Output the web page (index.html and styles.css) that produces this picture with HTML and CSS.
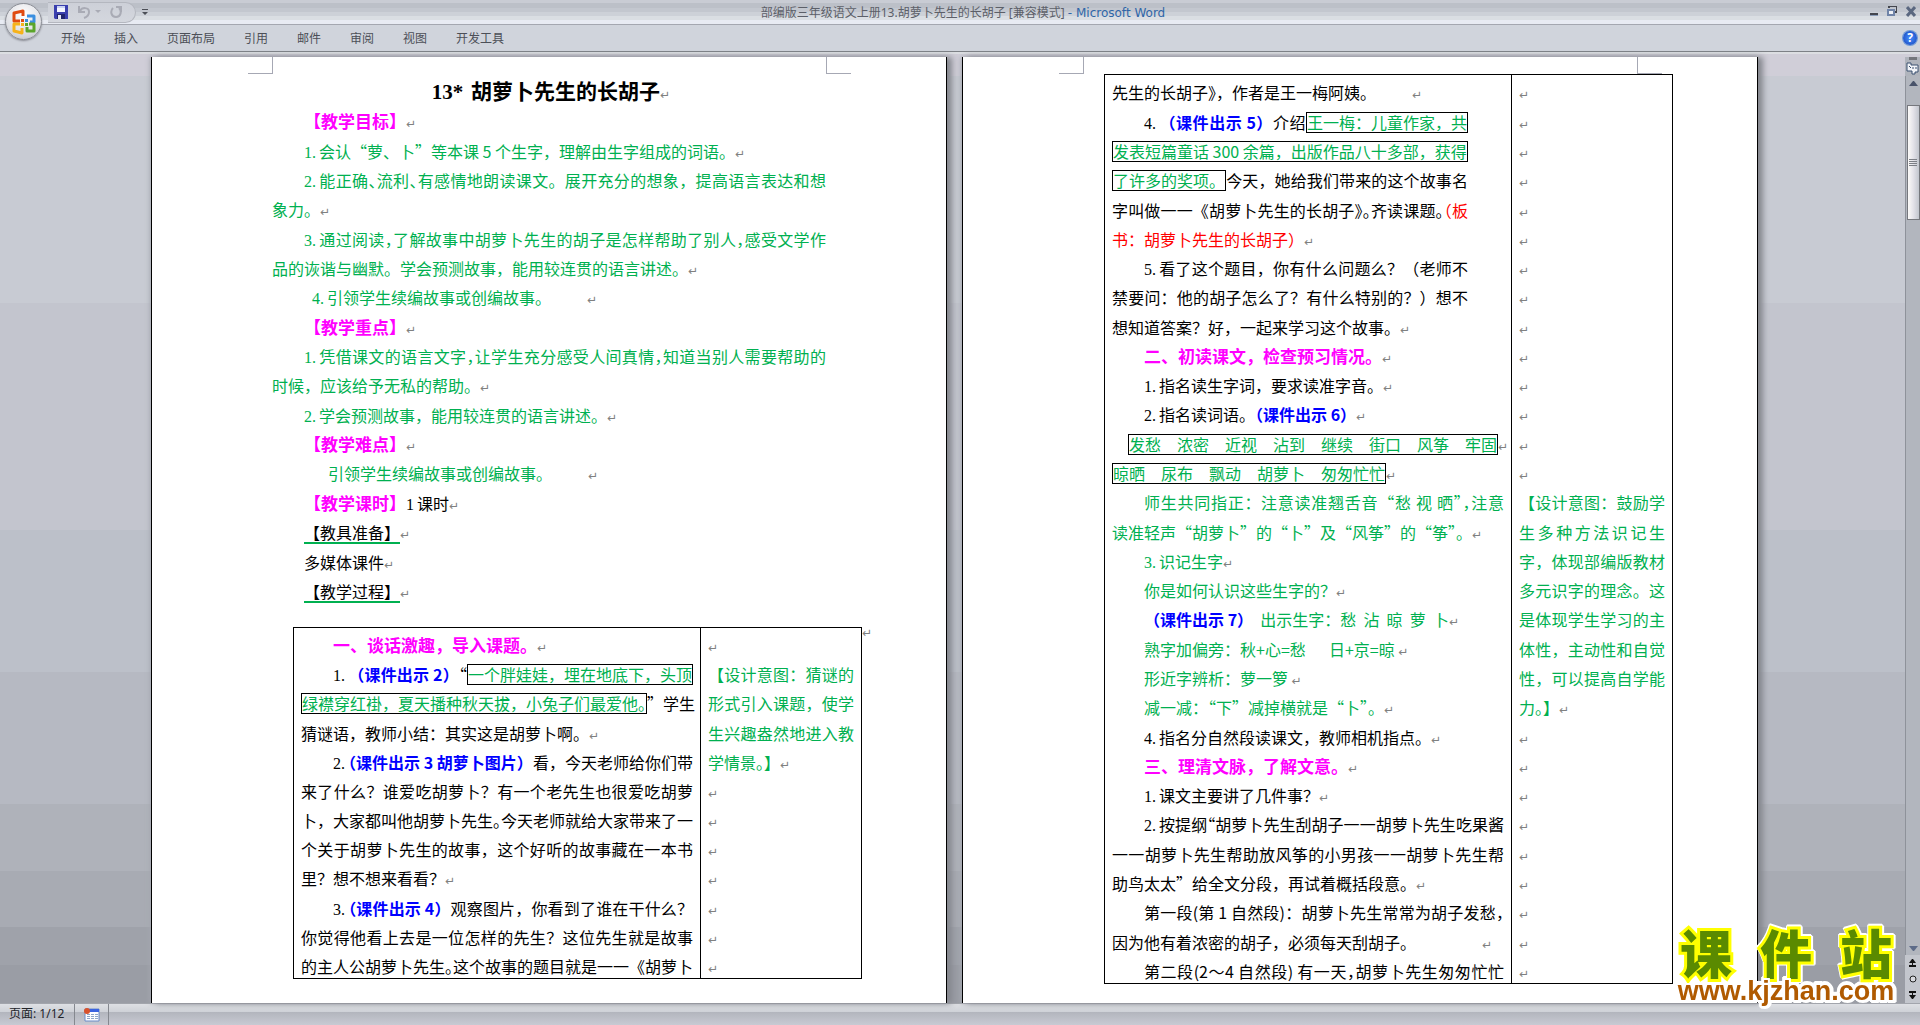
FILE: index.html
```html
<!DOCTYPE html>
<html lang="zh-CN">
<head>
<meta charset="UTF-8">
<meta name="viewport" content="width=device-width, initial-scale=1.0">
<title>部编版三年级语文上册13.胡萝卜先生的长胡子</title>
<link rel="stylesheet" href="styles.css">
</head>
<body>
<header class="titlebar">
    <div class="quick">
        <button class="tool" aria-label="保存">
            <svg width="14" height="14" viewBox="0 0 14 14"><path d="M0 0h14v14H1l-1-1z" fill="#3a3fae"/><path d="M3 1h8v6H3z" fill="#f4f6ff"/><path d="M3 1h8v2H3z" fill="#c9d3f5"/><path d="M3 9h8v5H3z" fill="#20246e"/><path d="M4 10h3v4H4z" fill="#e6e8f4"/></svg>
        </button>
        <button class="tool undo" aria-label="撤消">
            <svg width="24" height="14" viewBox="0 0 24 14"><path d="M2 1v6h6M3 6c2-4 9-4 9 1 0 3-2 5-5 6" fill="none" stroke="#a9abb5" stroke-width="2"/><path d="M18 5h6l-3 3z" fill="#a9abb5"/></svg>
        </button>
        <button class="tool" aria-label="恢复">
            <svg width="13" height="14" viewBox="0 0 13 14"><path d="M3 3C0 6 1 12 6 12s6-6 3-9M6 2h5v5" fill="none" stroke="#a9abb5" stroke-width="2"/></svg>
        </button>
    </div>
    <button class="tool more" aria-label="自定义快速访问工具栏">
        <svg width="6" height="7" viewBox="0 0 6 7"><path d="M0 0h6v1H0zM0 3h6L3 6z" fill="#4c4f57"/></svg>
    </button>
    <h1 class="caption">部编版三年级语文上册13.胡萝卜先生的长胡子 [兼容模式] <span>- Microsoft Word</span></h1>
    <div class="winbtns">
        <button class="tool" aria-label="最小化"><svg width="8" height="12" viewBox="0 0 8 12"><path d="M0 7h8v2H0z" fill="#44464e"/><path d="M0 9h8v1H0z" fill="#8a9cb8"/></svg></button>
        <button class="tool" aria-label="还原"><svg width="10" height="12" viewBox="0 0 10 12"><path d="M2 2V0h8v6H8" fill="none" stroke="#44464e" stroke-width="2"/><path d="M1 4h6v5H1z" fill="#eef1f6" stroke="#7084a8" stroke-width="2"/></svg></button>
        <button class="tool" aria-label="关闭"><svg width="10" height="12" viewBox="0 0 10 12"><path d="M1 1l8 9M9 1l-8 9" stroke="#5b6880" stroke-width="3"/></svg></button>
    </div>
</header>
<nav class="ribbon">
    <button>开始</button>
    <button>插入</button>
    <button>页面布局</button>
    <button>引用</button>
    <button>邮件</button>
    <button>审阅</button>
    <button>视图</button>
    <button>开发工具</button>
    <button class="help" aria-label="帮助">?</button>
</nav>
<button class="office" aria-label="Office 按钮">
    <svg width="26" height="26" viewBox="0 0 26 26" fill="none" stroke-width="3" stroke-linejoin="round">
        <path d="M12 7V2L3 4v8h6" stroke="#e04a10"/>
        <path d="M16 7h7v6h-4" stroke="#3b8fe0"/>
        <path d="M9 15H3v7l8 2v-5" stroke="#f6b21a"/>
        <path d="M18 15h5v7h-7v-4" stroke="#5ba52a"/>
        <path d="M10 10h3v3h-3z" fill="#e04a10" stroke="none"/>
        <path d="M14 10h3v3h-3z" fill="#3b8fe0" stroke="none"/>
        <path d="M10 14h3v3h-3z" fill="#f6b21a" stroke="none"/>
        <path d="M14 14h3v3h-3z" fill="#5ba52a" stroke="none"/>
    </svg>
</button>

<main class="workspace">
    <article class="page first">
        <i class="corner left"></i><i class="corner right"></i>
        <h2 class="doc-title"><span class="n">13*</span> 胡萝卜先生的长胡子<span class="m">↵</span></h2>
        <section class="intro">
            <p class="in"><b class="pink">【教学目标】</b><span class="m">↵</span></p>
            <p class="in green"><span class="n">1.</span>会认“萝、卜”等本课 5 个生字，理解由生字组成的词语。<span class="m">↵</span></p>
            <p class="in green j"><span class="n">2.</span>能正确<i class="h">、</i>流利<i class="h">、</i>有感情地朗读课文。展开充分的想象，提高语言表达和想</p>
            <p class="green">象力。<span class="m">↵</span></p>
            <p class="in green j"><span class="n">3.</span>通过阅读<i class="h">，</i>了解故事中胡萝卜先生的胡子是怎样帮助了别人<i class="h">，</i>感受文学作</p>
            <p class="green">品的诙谐与幽默。学会预测故事，能用较连贯的语言讲述。<span class="m">↵</span></p>
            <p class="in-more green"><span class="n">4.</span>引领学生续编故事或创编故事。<span class="m tab">↵</span></p>
            <p class="in"><b class="pink">【教学重点】</b><span class="m">↵</span></p>
            <p class="in green j"><span class="n">1.</span>凭借课文的语言文字<i class="h">，</i>让学生充分感受人间真情<i class="h">，</i>知道当别人需要帮助的</p>
            <p class="green">时候，应该给予无私的帮助。<span class="m">↵</span></p>
            <p class="in green"><span class="n">2.</span>学会预测故事，能用较连贯的语言讲述。<span class="m">↵</span></p>
            <p class="in"><b class="pink">【教学难点】</b><span class="m">↵</span></p>
            <p class="in-most green">引领学生续编故事或创编故事。<span class="m tab">↵</span></p>
            <p class="in"><b class="pink">【教学课时】</b><span class="n">1</span>课时<span class="m">↵</span></p>
            <p class="in"><span class="line">【教具准备】</span><span class="m">↵</span></p>
            <p class="in">多媒体课件<span class="m">↵</span></p>
            <p class="in"><span class="line">【教学过程】</span><span class="m">↵</span></p>
        </section>
        <div class="lesson">
            <span class="m row-end">↵</span>
            <table>
                <colgroup><col><col class="notes"></colgroup>
                <tr><td class="in"><b class="pink">一、谈话激趣，导入课题。</b><span class="m">↵</span></td><td><span class="m">↵</span></td></tr>
                <tr><td class="in j"><span class="n">1.</span><b class="blue">（课件出示 2）</b><i class="h">“</i><span class="box">一个胖娃娃，埋在地底下，头顶</span></td><td class="green j">【设计意图：猜谜的</td></tr>
                <tr><td class="j"><span class="box">绿襟穿红褂，夏天播种秋天拔，小兔子们最爱他<i class="h">。</i></span>”学生</td><td class="green j">形式引入课题，使学</td></tr>
                <tr><td>猜谜语，教师小结：其实这是胡萝卜啊。<span class="m">↵</span></td><td class="green j">生兴趣盎然地进入教</td></tr>
                <tr><td class="in j"><span class="n">2.</span><b class="blue"><i class="h">（</i>课件出示 3 胡萝卜图片）</b>看，今天老师给你们带</td><td class="green">学情景<i class="h">。</i>】<span class="m">↵</span></td></tr>
                <tr><td class="j">来了什么？谁爱吃胡萝卜？有一个老先生也很爱吃胡萝</td><td><span class="m">↵</span></td></tr>
                <tr><td class="j">卜，大家都叫他胡萝卜先生<i class="h">。</i>今天老师就给大家带来了一</td><td><span class="m">↵</span></td></tr>
                <tr><td class="j">个关于胡萝卜先生的故事，这个好听的故事藏在一本书</td><td><span class="m">↵</span></td></tr>
                <tr><td>里？想不想来看看？<span class="m">↵</span></td><td><span class="m">↵</span></td></tr>
                <tr><td class="in j"><span class="n">3.</span><b class="blue"><i class="h">（</i>课件出示 4）</b>观察图片，你看到了谁在干什么？</td><td><span class="m">↵</span></td></tr>
                <tr><td class="j">你觉得他看上去是一位怎样的先生？这位先生就是故事</td><td><span class="m">↵</span></td></tr>
                <tr><td class="j">的主人公胡萝卜先生<i class="h">。</i>这个故事的题目就是一一《胡萝卜</td><td><span class="m">↵</span></td></tr>
            </table>
        </div>
    </article>

    <article class="page second">
        <i class="corner left"></i><i class="corner right"></i>
        <div class="lesson">
            <table>
                <colgroup><col><col class="notes"></colgroup>
                <tr><td>先生的长胡子<i class="h">》</i>，作者是王一梅阿姨。<span class="m tab">↵</span></td><td><span class="m">↵</span></td></tr>
                <tr><td class="in j narrow"><span class="n">4.</span><b class="blue">（课件出示 5）</b>介绍<span class="box">王一梅：儿童作家，共</span></td><td><span class="m">↵</span></td></tr>
                <tr><td class="narrow"><span class="box">发表短篇童话 300 余篇，出版作品八十多部，获得</span></td><td><span class="m">↵</span></td></tr>
                <tr><td class="j narrow"><span class="box">了许多的奖项。</span>今天，她给我们带来的这个故事名</td><td><span class="m">↵</span></td></tr>
                <tr><td class="j narrow">字叫做一一《胡萝卜先生的长胡子<i class="h">》</i><i class="h">。</i>齐读课题<i class="h">。</i><span class="red"><i class="h">（</i>板</span></td><td><span class="m">↵</span></td></tr>
                <tr><td><span class="red">书：胡萝卜先生的长胡子）</span><span class="m">↵</span></td><td><span class="m">↵</span></td></tr>
                <tr><td class="in j narrow"><span class="n">5.</span>看了这个题目，你有什么问题么？（老师不</td><td><span class="m">↵</span></td></tr>
                <tr><td class="j narrow">禁要问：他的胡子怎么了？有什么特别的？）想不</td><td><span class="m">↵</span></td></tr>
                <tr><td>想知道答案？好，一起来学习这个故事。<span class="m">↵</span></td><td><span class="m">↵</span></td></tr>
                <tr><td class="in"><b class="pink">二、初读课文，检查预习情况。</b><span class="m">↵</span></td><td><span class="m">↵</span></td></tr>
                <tr><td class="in"><span class="n">1.</span>指名读生字词，要求读准字音。<span class="m">↵</span></td><td><span class="m">↵</span></td></tr>
                <tr><td class="in"><span class="n">2.</span>指名读词语。<b class="blue"><i class="h">（</i>课件出示 6）</b><span class="m">↵</span></td><td><span class="m">↵</span></td></tr>
                <tr><td class="in-less"><span class="box">发愁　浓密　近视　沾到　继续　街口　风筝　牢固</span><span class="m">↵</span></td><td><span class="m">↵</span></td></tr>
                <tr><td><span class="box">晾晒　尿布　飘动　胡萝卜　匆匆忙忙</span><span class="m">↵</span></td><td><span class="m">↵</span></td></tr>
                <tr><td class="in green j">师生共同指正：注意读准翘舌音“愁 视 晒<i class="h">”</i><i class="h">，</i>注意</td><td class="green j">【设计意图：鼓励学</td></tr>
                <tr><td class="green">读准轻声“胡萝卜”的“卜”及“风筝”的“筝<i class="h">”</i>。<span class="m">↵</span></td><td class="green j">生多种方法识记生</td></tr>
                <tr><td class="in green"><span class="n">3.</span>识记生字<span class="m">↵</span></td><td class="green j">字，体现部编版教材</td></tr>
                <tr><td class="in green">你是如何认识这些生字的？<span class="m">↵</span></td><td class="green j">多元识字的理念。这</td></tr>
                <tr><td class="in green"><b class="blue">（课件出示 7）</b>&nbsp; 出示生字：愁&nbsp; 沾&nbsp; 晾&nbsp; 萝&nbsp; 卜<span class="m">↵</span></td><td class="green j">是体现学生学习的主</td></tr>
                <tr><td class="in green">熟字加偏旁：秋+心=愁　&nbsp; 日+京=晾 <span class="m">↵</span></td><td class="green j">体性，主动性和自觉</td></tr>
                <tr><td class="in green">形近字辨析：萝一箩 <span class="m">↵</span></td><td class="green j">性，可以提高自学能</td></tr>
                <tr><td class="in green">减一减：“下”减掉横就是“卜<i class="h">”</i>。<span class="m">↵</span></td><td class="green">力<i class="h">。</i>】<span class="m">↵</span></td></tr>
                <tr><td class="in"><span class="n">4.</span>指名分自然段读课文，教师相机指点。<span class="m">↵</span></td><td><span class="m">↵</span></td></tr>
                <tr><td class="in"><b class="pink">三、理清文脉，了解文意。</b><span class="m">↵</span></td><td><span class="m">↵</span></td></tr>
                <tr><td class="in"><span class="n">1.</span>课文主要讲了几件事？<span class="m">↵</span></td><td><span class="m">↵</span></td></tr>
                <tr><td class="in j"><span class="n">2.</span>按提纲<i class="h">“</i>胡萝卜先生刮胡子一一胡萝卜先生吃果酱</td><td><span class="m">↵</span></td></tr>
                <tr><td class="j">一一胡萝卜先生帮助放风筝的小男孩一一胡萝卜先生帮</td><td><span class="m">↵</span></td></tr>
                <tr><td>助鸟太太”给全文分段，再试着概括段意。<span class="m">↵</span></td><td><span class="m">↵</span></td></tr>
                <tr><td class="in j">第一段(第 1 自然段)：胡萝卜先生常常为胡子发愁<i class="h">，</i></td><td><span class="m">↵</span></td></tr>
                <tr><td>因为他有着浓密的胡子，必须每天刮胡子。<span class="m far">↵</span></td><td><span class="m">↵</span></td></tr>
                <tr><td class="in j">第二段(2～4 自然段) 有一天<i class="h">，</i>胡萝卜先生匆匆忙忙</td><td><span class="m">↵</span></td></tr>
            </table>
        </div>
    </article>

    <aside class="scroll">
        <span class="split"></span>
        <button class="tool ruler" aria-label="标尺"><svg width="13" height="13" viewBox="0 0 13 13"><path d="M1 1h4v2h7v7h-3v2H6V9H1z" fill="#f2f4f8" stroke="#3a5070"/><path d="M3 4l2 2M7 5v2M10 5v2" stroke="#3a5070"/></svg></button>
        <div class="track">
            <button class="tool" aria-label="向上"><svg width="9" height="5" viewBox="0 0 9 5"><path d="M0 5h9L5 0H4z" fill="#49536a"/></svg></button>
            <span class="thumb"><i></i><i></i><i></i><i></i></span>
            <button class="tool down" aria-label="向下"><svg width="9" height="5" viewBox="0 0 9 5"><path d="M0 0h9L5 5H4z" fill="#5d6b88"/></svg></button>
        </div>
        <div class="browse">
            <button class="tool" aria-label="前一页"><svg width="7" height="8" viewBox="0 0 7 8"><path d="M0 4l3-4h1l3 4H4v2h3v2H0V6h3V4z" fill="#111"/></svg></button>
            <button class="tool" aria-label="选择浏览对象"><svg width="8" height="8" viewBox="0 0 8 8"><circle cx="4" cy="4" r="3" fill="#d8dae0" stroke="#222"/></svg></button>
            <button class="tool" aria-label="下一页"><svg width="7" height="8" viewBox="0 0 7 8"><path d="M0 4l3 4h1l3-4H4V2h3V0H0v2h3v2z" fill="#111"/></svg></button>
        </div>
    </aside>
</main>

<footer class="status">
    <span class="pages">页面: 1/12</span>
    <button class="tool macro" aria-label="宏"><svg width="16" height="14" viewBox="0 0 16 14"><path d="M1 1h14v12H1z" fill="#fdfdff" stroke="#6a8cc8"/><path d="M4 1h11v3H4z" fill="#3a63e0"/><path d="M3 6h3v1H3zM7 6h3v1H7zM11 6h3v1h-3zM3 8h3v1H3zM7 8h3v1H7zM11 8h3v1h-3zM3 10h3v1H3zM7 10h3v1H7zM11 10h3v1h-3z" fill="#8ea6c8"/><circle cx="3" cy="3" r="3" fill="#d8522c"/></svg></button>
</footer>

<div class="brand">
    <div class="brand-name"><span>课</span><span>件</span><span>站</span></div>
    <div class="brand-url">www.kjzhan.com</div>
</div>
</body>
</html>
```
FILE: styles.css
```css
* {
    box-sizing: border-box;
}

body {
    margin: 0;
    height: 100vh;
    display: flex;
    flex-direction: column;
    position: relative;
    overflow: hidden;
    font-family: "Noto Sans", "Noto Sans CJK SC", sans-serif;
    font-size: 12px;
    color: #4c4f57;
    background-color: #d0ced8;
}

button {
    font: inherit;
    color: inherit;
    border: none;
    background: none;
    padding: 0;
}

.tool {
    display: flex;
    align-items: center;
}

/* title bar and ribbon */
.titlebar {
    height: 24px;
    display: flex;
    align-items: center;
    padding: 0 4px 0 48px;
    background: linear-gradient(#c9ccd4 0 3px, #bcc0c8 3px 8px, #c3c7cf 8px 12px, #cdd1d8 12px 16px, #dadee3 16px 20px, #e8ebf3 20px);
}

.quick {
    width: 88px;
    height: 21px;
    display: flex;
    align-items: center;
    gap: 9px;
    padding-left: 6px;
    border: 1px solid #b4b7bf;
    border-left: none;
    border-radius: 0 11px 11px 0;
    background: linear-gradient(#cdd0d8, #d4d7de);
}

.more {
    margin-left: 6px;
}

.caption {
    flex: 1;
    margin: 0;
    text-align: center;
    font-size: 12px;
    font-weight: normal;
    color: #5c5f68;
    padding-right: 92px;
}

.caption span {
    font-family: "DejaVu Sans", sans-serif;
    color: #2f66a8;
}

.winbtns {
    display: flex;
    gap: 9px;
}

.ribbon {
    height: 33px;
    display: flex;
    align-items: center;
    gap: 29px;
    padding: 0 3px 7px 61px;
    background: linear-gradient(#d0d4dc 26px, #7d8186 26px 27px, #dcdee2 27px 29px, #d0ced8 29px);
    border-top: 1px solid #a4a7b0;
}

.ribbon .help {
    margin-left: auto;
    width: 14px;
    height: 14px;
    border-radius: 50%;
    background: radial-gradient(#4a90ff, #1040b8);
    box-shadow: 0 0 0 1px #6d9ad8;
    color: #fff;
    font-weight: bold;
    line-height: 14px;
}

.office {
    position: absolute;
    left: 5px;
    top: 3px;
    width: 37px;
    height: 37px;
    display: flex;
    align-items: center;
    justify-content: center;
    border: 1px solid #8b8e96;
    border-radius: 50%;
    background: radial-gradient(circle at 50% 30%, #ffffff, #dfe0e5 60%, #b9bbc2);
    box-shadow: 0 1px 2px #8a8c94;
}

/* document area */
.workspace {
    flex: 1;
    min-height: 0;
    display: grid;
    grid-template-columns: 151fr 796fr 15px 796fr 147fr 15px;
    background: linear-gradient(#d0ced8 2%, #c8cbd3 2% 26%, #c3c5ce 26% 50%, #bcc0c9 50% 65%, #b6b9c2 65% 79%, #afb2ba 79% 86%, #a8abb3 86% 92%, #9fa2aa 92% 96%, #9a9da5 96%);
}

.page {
    position: relative;
    display: flex;
    flex-direction: column;
    background-color: #fff;
    border: 1px solid #000;
    border-width: 0 1px;
    color: #000;
    font-size: 16px;
    line-height: 24px;
    font-family: "Noto Sans CJK SC", sans-serif;
    white-space: nowrap;
    box-shadow: 5px 0 6px #85878e, -1px 0 5px #a6a9b1;
}

.first {
    grid-column: 2;
    padding: 19px 84px 24px 141px;
}

.second {
    grid-column: 4;
    padding: 17px 84px 19px 141px;
}

.corner {
    position: absolute;
    top: 0;
    width: 25px;
    height: 17px;
    border-bottom: 1px solid #a6a8b4;
}

.corner.left {
    left: 96px;
    border-right: 1px solid #a6a8b4;
}

.corner.right {
    right: 95px;
    border-left: 1px solid #a6a8b4;
}

.doc-title {
    margin: 0;
    text-align: center;
    font-size: 21px;
    line-height: 28px;
    padding-right: 53px;
}

/* 17 lines above the table, 12 lines in it */
.intro {
    flex: 17;
    display: grid;
    grid-auto-rows: 1fr;
    align-items: end;
    margin: 0 36px 24px -21px;
}

.intro p {
    margin: 0;
}

.lesson {
    flex: 12;
    position: relative;
}

table {
    width: 100%;
    height: 100%;
    table-layout: fixed;
    border-collapse: collapse;
    border: 1px solid #000;
}

.notes {
    width: 161px;
}

td {
    padding: 0 7px;
    vertical-align: bottom;
}

td + td {
    border-left: 1px solid #000;
}

td.narrow {
    padding-right: 43px;
}

.row-end {
    position: absolute;
    left: 100%;
    top: 0;
}

.in-less {
    text-indent: 16px;
}

.in {
    text-indent: 32px;
}

.in-more {
    text-indent: 40px;
}

.in-most {
    text-indent: 56px;
}

.j {
    text-align-last: justify;
}

.n {
    font-family: "Liberation Serif", serif;
    line-height: 1;
    padding-right: 3px;
}

/* half-width punctuation */
.h {
    font-style: normal;
    font-feature-settings: "halt";
}

.m {
    font-family: "DejaVu Sans", sans-serif;
    font-size: 12px;
    font-weight: normal;
    line-height: 1;
    color: #808080;
}

.m.tab {
    padding-left: 36px;
}

.m.far {
    padding-left: 66px;
}

.box {
    display: inline-block;
    text-indent: 0;
    line-height: 19px;
    border: 1px solid #000;
    color: #00b050;
}

.line {
    display: inline-block;
    text-indent: 0;
    line-height: 20px;
    border-bottom: 2px solid #00b050;
}

.green {
    color: #00b050;
}

.pink {
    font-size: 17px;
    line-height: 1;
    color: #ff00ff;
}

.blue {
    color: #0000ff;
}

.red {
    color: #ff0000;
}

/* scroll bar */
.scroll {
    grid-column: 6;
    display: flex;
    flex-direction: column;
    align-items: center;
    background-color: #b0b4bc;
}

.split {
    width: 8px;
    height: 3px;
    background-color: #74767c;
}

.ruler {
    height: 16px;
}

.track {
    flex: 1;
    width: 100%;
    display: flex;
    flex-direction: column;
    align-items: center;
    padding: 5px 0 4px;
    border-left: 1px solid #8e929a;
    background-color: #b2b6be;
}

.thumb {
    width: 13px;
    height: 115px;
    margin-top: 19px;
    display: flex;
    flex-direction: column;
    align-items: center;
    justify-content: center;
    gap: 1px;
    border: 1px solid #75777d;
    background: linear-gradient(90deg, #fbfaf8, #e2e1e8 50%, #c2c6ce);
}

.thumb i {
    width: 8px;
    height: 1px;
    background-color: #7c7f86;
}

.down {
    margin-top: auto;
}

.browse {
    width: 100%;
    height: 48px;
    display: flex;
    flex-direction: column;
    align-items: center;
    justify-content: space-around;
    background-color: #c3c6cd;
}

/* status bar */
.status {
    height: 22px;
    display: flex;
    align-items: stretch;
    color: #22242a;
    border-top: 1px solid #a2a5ac;
    background: linear-gradient(#dee0e4, #ced1d7 8px, #b2b5bd 8px, #c8cad3);
}

.pages {
    width: 75px;
    padding-left: 9px;
    line-height: 20px;
    border-right: 1px solid #85888f;
}

.macro {
    width: 34px;
    justify-content: center;
    border-right: 1px solid #85888f;
}

/* site mark over the lower right corner */
.brand {
    position: absolute;
    right: 20px;
    bottom: 22px;
    width: 228px;
    filter: drop-shadow(1px 1px 0 #fff) drop-shadow(-1px -1px 0 #fff) drop-shadow(1px -1px 0 #fff);
}

.brand-name {
    display: flex;
    justify-content: space-between;
    padding: 0 8px;
    font-family: "Noto Sans CJK SC", sans-serif;
    font-size: 52px;
    font-weight: 900;
    line-height: 54px;
    color: #5a8a00;
    -webkit-text-stroke: 6px #ffff00;
    paint-order: stroke fill;
}

.brand-url {
    position: relative;
    font-family: "Liberation Sans", sans-serif;
    font-size: 27px;
    font-weight: bold;
    line-height: 24px;
    text-align: center;
    color: #b05a00;
    -webkit-text-stroke: 4px #fff;
    paint-order: stroke fill;
}
```
